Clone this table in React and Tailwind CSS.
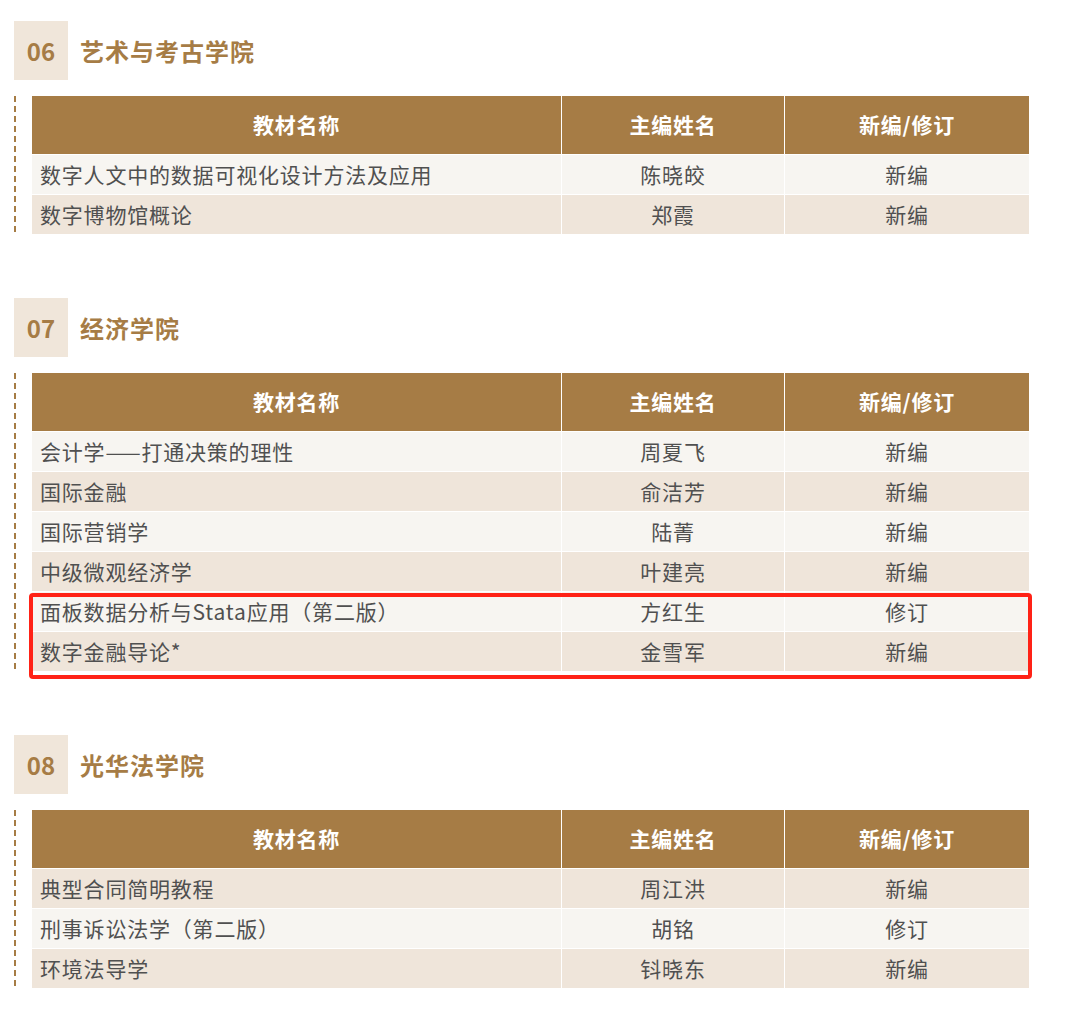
import React from 'react';

const sections = [
  {
    no: '06',
    name: '艺术与考古学院',
    firstLight: true,
    rows: [
      ['数字人文中的数据可视化设计方法及应用', '陈晓皎', '新编'],
      ['数字博物馆概论', '郑霞', '新编'],
    ],
  },
  {
    no: '07',
    name: '经济学院',
    firstLight: true,
    highlight: true,
    rows: [
      ['会计学——打通决策的理性', '周夏飞', '新编'],
      ['国际金融', '俞洁芳', '新编'],
      ['国际营销学', '陆菁', '新编'],
      ['中级微观经济学', '叶建亮', '新编'],
      ['面板数据分析与Stata应用（第二版）', '方红生', '修订'],
      ['数字金融导论*', '金雪军', '新编'],
    ],
  },
  {
    no: '08',
    name: '光华法学院',
    firstLight: false,
    rows: [
      ['典型合同简明教程', '周江洪', '新编'],
      ['刑事诉讼法学（第二版）', '胡铭', '修订'],
      ['环境法导学', '钭晓东', '新编'],
    ],
  },
];

const Section = ({ section }) => (
  <div>
    <div className="flex items-center gap-[12px]">
      <div className="w-[54px] h-[59px] bg-[#f0e6da] flex items-center justify-center text-[24px] font-bold tracking-normal text-[#a67c45]">
        {section.no}
      </div>
      <div className="text-[24px] font-bold tracking-[1px] text-[#a67c45]">{section.name}</div>
    </div>

    <div className="flex mt-[16px]">
      <div className="w-[2px] bg-[repeating-linear-gradient(to_bottom,#a67c45_0_6px,transparent_6px_10px)]"></div>
      <div className="relative ml-[16px] w-[997px]">
        <div className="grid grid-cols-[529px_222px_1fr] gap-[1px] bg-white">
          <div className="h-[58px] bg-[#a67c45] flex items-center justify-center text-white font-bold">教材名称</div>
          <div className="h-[58px] bg-[#a67c45] flex items-center justify-center text-white font-bold">主编姓名</div>
          <div className="h-[58px] bg-[#a67c45] flex items-center justify-center text-white font-bold">新编/修订</div>
          {section.rows.map((row, i) => {
            const light = section.firstLight ? i % 2 === 0 : i % 2 === 1;
            const bg = light ? 'bg-[#f7f5f1]' : 'bg-[#efe5da]';
            return (
              <React.Fragment key={i}>
                <div className={`h-[39px] ${bg} flex items-center pl-[8px]`}>{row[0]}</div>
                <div className={`h-[39px] ${bg} flex items-center justify-center`}>{row[1]}</div>
                <div className={`h-[39px] ${bg} flex items-center justify-center`}>{row[2]}</div>
              </React.Fragment>
            );
          })}
        </div>
        {section.highlight && (
          <div className="absolute left-[-3px] top-[220px] w-[1003px] h-[86px] border-[4px] border-[#ff2216] rounded-[4px]"></div>
        )}
      </div>
    </div>
  </div>
);

const App = () => {
  return (
    <div
      className="bg-white min-h-screen pt-[21px] pl-[14px] text-[21px] tracking-[0.8px] text-[#505050]"
      style={{ fontFamily: '"Noto Sans CJK SC", "Noto Sans", sans-serif' }}
    >
      <div className="flex flex-col gap-[64px]">
        {sections.map((s) => (
          <Section key={s.no} section={s} />
        ))}
      </div>
    </div>
  );
};

export default App;
